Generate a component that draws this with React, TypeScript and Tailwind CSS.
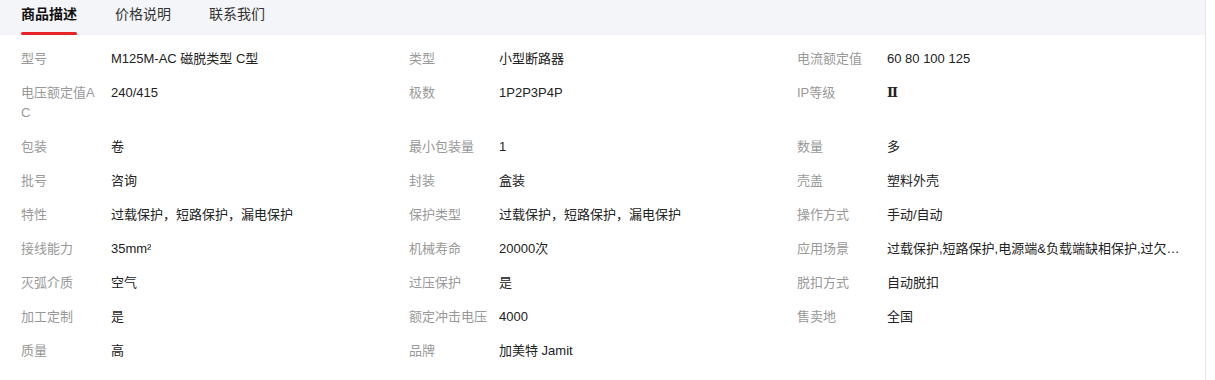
const tabs = ['商品描述', '价格说明', '联系我们'];

const specs: [string, string][] = [
  ['型号', 'M125M-AC 磁脱类型 C型'],
  ['类型', '小型断路器'],
  ['电流额定值', '60 80 100 125'],
  ['电压额定值AC', '240/415'],
  ['极数', '1P2P3P4P'],
  ['IP等级', 'Ⅱ'],
  ['包装', '卷'],
  ['最小包装量', '1'],
  ['数量', '多'],
  ['批号', '咨询'],
  ['封装', '盒装'],
  ['壳盖', '塑料外壳'],
  ['特性', '过载保护，短路保护，漏电保护'],
  ['保护类型', '过载保护，短路保护，漏电保护'],
  ['操作方式', '手动/自动'],
  ['接线能力', '35mm²'],
  ['机械寿命', '20000次'],
  ['应用场景', '过载保护,短路保护,电源端&负载端缺相保护,过欠压保护,防雷保护'],
  ['灭弧介质', '空气'],
  ['过压保护', '是'],
  ['脱扣方式', '自动脱扣'],
  ['加工定制', '是'],
  ['额定冲击电压', '4000'],
  ['售卖地', '全国'],
  ['质量', '高'],
  ['品牌', '加美特 Jamit'],
];

export default function App() {
  return (
    <div
      className="w-[1206px] min-h-[380px] border-r border-r-[#e6e6e6] bg-white"
      style={{ fontFamily: '"Liberation Sans", "Noto Sans CJK SC", sans-serif' }}
    >
      <div className="flex h-[35px] gap-[38px] bg-[#f4f5f8] px-[21px]">
        {tabs.map((tab, i) => (
          <div key={tab} className="flex flex-col">
            <span
              className={`pt-1 text-[14px] leading-[20px] ${
                i === 0 ? 'font-bold text-[#111]' : 'text-[#333]'
              }`}
            >
              {tab}
            </span>
            <span
              className={`mt-2 h-[3px] rounded-full ${i === 0 ? 'bg-[#e8232a]' : 'bg-transparent'}`}
            />
          </div>
        ))}
      </div>
      <div className="grid grid-cols-3 gap-y-[14px] pl-[21px] pr-[20px] pt-[14px] pb-4 text-[13px] leading-[20px]">
        {specs.map(([label, value]) => (
          <div key={label} className="flex min-w-0">
            <span className="w-[78px] shrink-0 break-all text-[#999]">{label}</span>
            <span
              className={`ml-3 min-w-0 truncate text-[#222] ${
                value === 'Ⅱ' ? 'font-["DejaVu_Serif"] font-bold' : ''
              }`}
            >
              {value}
            </span>
          </div>
        ))}
      </div>
    </div>
  );
}
